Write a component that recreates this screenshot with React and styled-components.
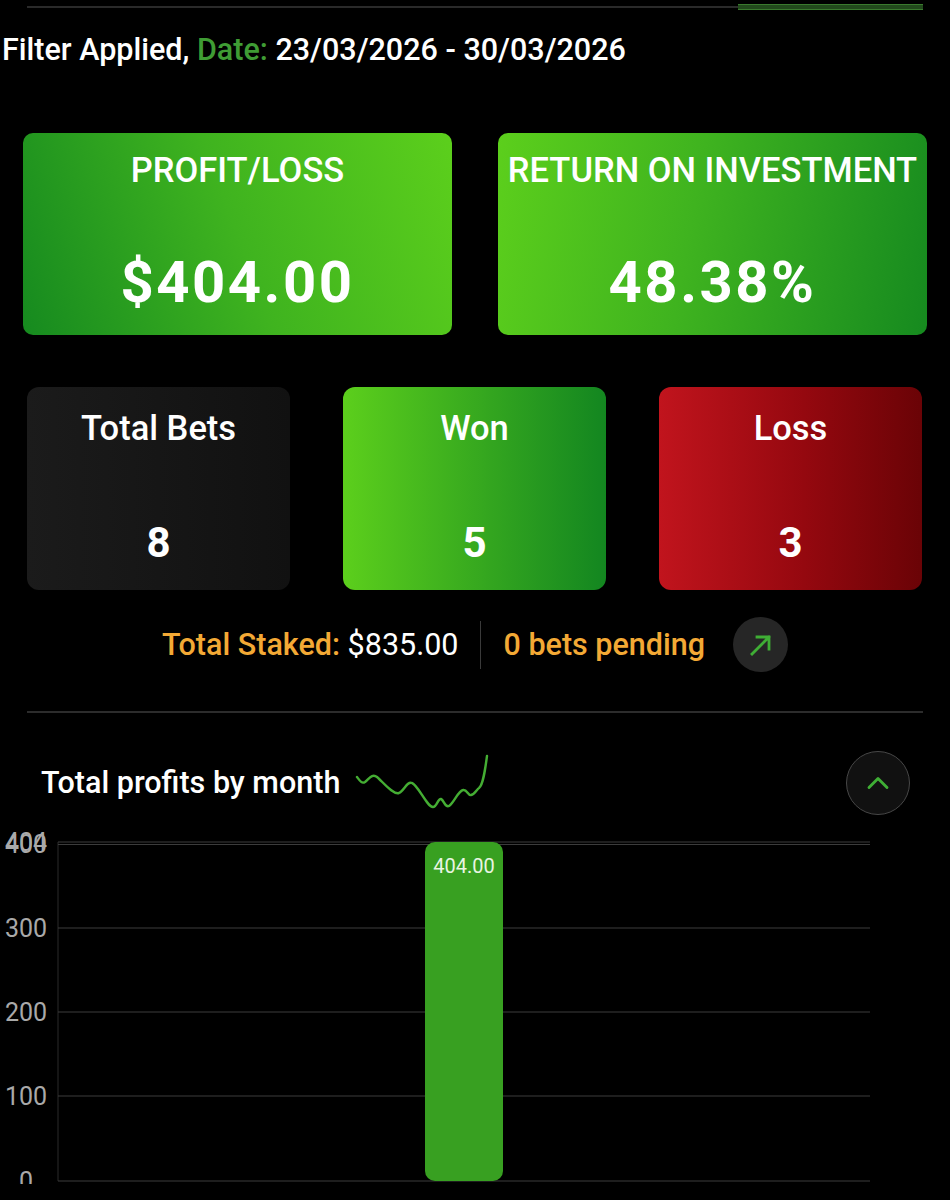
import React from "react";
import styled, { createGlobalStyle } from "styled-components";
import { ChevronUp } from "lucide-react";

const GlobalStyle = createGlobalStyle`
  * { box-sizing: border-box; }
  html, body {
    margin: 0;
    padding: 0;
    background: #000;
    color: #fff;
    font-family: Roboto, "Liberation Sans", sans-serif;
  }
`;

const Page = styled.div`
  width: 950px;
  height: 1200px;
  overflow: hidden;
  background: #000;
  display: flex;
  flex-direction: column;
`;

const TabBar = styled.div`
  margin: 0 27px;
  height: 14px;
  display: flex;
  justify-content: flex-end;
  align-items: center;
  background: linear-gradient(#2a2a2a, #2a2a2a) center / 100% 2px no-repeat;
`;

const TabIndicator = styled.div`
  width: 185px;
  height: 6px;
  border-top: 1.5px solid #3a7a2e;
  border-bottom: 1.5px solid #3a7a2e;
  background: #22491c;
`;

const FilterText = styled.div`
  margin-top: 18px;
  padding-left: 2px;
  font-size: 30.5px;
  font-weight: 500;
  line-height: 36px;
  white-space: nowrap;
`;

const Green = styled.span`
  color: #3f9c34;
`;

const TopGrid = styled.div`
  margin: 65px 23px 0;
  display: grid;
  grid-template-columns: 429px 429px;
  gap: 46px;
`;

const BigCard = styled.div`
  height: 202px;
  border-radius: 10px;
  padding: 16px 0 18px;
  display: flex;
  flex-direction: column;
  align-items: center;
  background: ${(p) =>
    p.$reverse
      ? "linear-gradient(100deg, #5ccf1c 0%, #3fb31f 45%, #168a1f 100%)"
      : "linear-gradient(70deg, #168a1f 0%, #3fb31f 50%, #5ccf1c 100%)"};
`;

const BigTitle = styled.div`
  font-size: 34.5px;
  font-weight: 500;
  line-height: 42px;
  white-space: nowrap;
`;

const BigValue = styled.div`
  margin-top: auto;
  font-size: 58px;
  font-weight: 700;
  line-height: 70px;
  letter-spacing: 2.5px;
`;

const SmallGrid = styled.div`
  margin: 52px 27px 0;
  display: grid;
  grid-template-columns: repeat(3, 263px);
  gap: 53px;
`;

const smallBg = {
  dark: "linear-gradient(90deg, #1b1b1b, #111111)",
  won: "linear-gradient(90deg, #5ccf1c 0%, #34a61f 55%, #138620 100%)",
  loss: "linear-gradient(90deg, #c1141d 0%, #95080f 55%, #6a0306 100%)",
};

const SmallCard = styled.div`
  height: 203px;
  border-radius: 12px;
  padding: 21px 0 22px;
  display: flex;
  flex-direction: column;
  align-items: center;
  background: ${(p) => smallBg[p.$tone]};
`;

const SmallTitle = styled.div`
  font-size: 34.5px;
  font-weight: 500;
  line-height: 40px;
`;

const SmallValue = styled.div`
  margin-top: auto;
  font-size: 42px;
  font-weight: 700;
  line-height: 50px;
`;

const StakedRow = styled.div`
  margin-top: 27px;
  height: 55px;
  display: flex;
  justify-content: center;
  align-items: center;
  gap: 22px;
  font-size: 30.5px;
  line-height: 36px;
`;

const Orange = styled.span`
  color: #f3a935;
  font-weight: 500;
`;

const White = styled.span`
  color: #fff;
`;

const VDivider = styled.div`
  width: 1px;
  height: 48px;
  background: #3a3a3a;
`;

const RoundButton = styled.div`
  width: ${(p) => p.$size}px;
  height: ${(p) => p.$size}px;
  border-radius: 50%;
  display: flex;
  align-items: center;
  justify-content: center;
  flex-shrink: 0;
  background: ${(p) => (p.$outlined ? "#111" : "#262626")};
  border: ${(p) => (p.$outlined ? "1.5px solid #474747" : "none")};
  color: #3fae35;
`;

const PendingButton = styled(RoundButton)`
  margin-left: 6px;
`;

const HDivider = styled.div`
  margin: 39px 27px 0 27px;
  height: 2px;
  background: #2c2c2c;
`;

const ChartHeader = styled.div`
  margin-top: 38px;
  height: 64px;
  padding: 0 40px 0 41px;
  display: flex;
  align-items: center;
`;

const ChartTitle = styled.div`
  font-size: 30.5px;
  font-weight: 500;
  line-height: 36px;
  white-space: nowrap;
`;

const Spark = styled.svg`
  margin-left: 15px;
  align-self: flex-start;
  flex-shrink: 0;
`;

const Spacer = styled.div`
  flex: 1;
`;

const ChartSvg = styled.svg`
  display: block;
  font-family: Roboto, "Liberation Sans", sans-serif;
`;

const ArrowIcon = () => (
  <svg width="24" height="24" viewBox="0 0 24 24" fill="none">
    <path
      d="M3 21 L20 4 M8 4 H20 V16"
      stroke="currentColor"
      strokeWidth="2.8"
      strokeLinecap="square"
    />
  </svg>
);

const ticks = [
  { label: "404", y: 27 },
  { label: "400", y: 29.5 },
  { label: "300", y: 113 },
  { label: "200", y: 197 },
  { label: "100", y: 281 },
  { label: "0", y: 366 },
];

const Chart = () => (
  <ChartSvg width="950" height="369" viewBox="0 0 950 369">
    <line x1="58" y1="27" x2="58" y2="366" stroke="#2a2a2a" strokeWidth="1" />
    {ticks.map((t) => (
      <line
        key={"g" + t.label}
        x1="58"
        y1={t.y}
        x2="870"
        y2={t.y}
        stroke="#3c3c3c"
        strokeWidth="1.2"
      />
    ))}
    {ticks.map((t) => (
      <text
        key={"t" + t.label}
        x="26"
        y={t.y}
        textAnchor="middle"
        dominantBaseline="central"
        fontSize="25"
        fill="#a9a9a9"
      >
        {t.label}
      </text>
    ))}
    <rect x="425" y="27" width="78" height="339" rx="10" fill="#38a021" />
    <text
      x="464"
      y="51"
      textAnchor="middle"
      dominantBaseline="central"
      fontSize="20"
      fill="#e9f5e3"
    >
      404.00
    </text>
  </ChartSvg>
);

export default function App() {
  return (
    <Page>
      <GlobalStyle />
      <TabBar>
        <TabIndicator />
      </TabBar>
      <FilterText>
        Filter Applied, <Green>Date:</Green> 23/03/2026 - 30/03/2026
      </FilterText>

      <TopGrid>
        <BigCard>
          <BigTitle>PROFIT/LOSS</BigTitle>
          <BigValue>$404.00</BigValue>
        </BigCard>
        <BigCard $reverse>
          <BigTitle>RETURN ON INVESTMENT</BigTitle>
          <BigValue>48.38%</BigValue>
        </BigCard>
      </TopGrid>

      <SmallGrid>
        <SmallCard $tone="dark">
          <SmallTitle>Total Bets</SmallTitle>
          <SmallValue>8</SmallValue>
        </SmallCard>
        <SmallCard $tone="won">
          <SmallTitle>Won</SmallTitle>
          <SmallValue>5</SmallValue>
        </SmallCard>
        <SmallCard $tone="loss">
          <SmallTitle>Loss</SmallTitle>
          <SmallValue>3</SmallValue>
        </SmallCard>
      </SmallGrid>

      <StakedRow>
        <span>
          <Orange>Total Staked:</Orange> <White>$835.00</White>
        </span>
        <VDivider />
        <Orange>0 bets pending</Orange>
        <PendingButton $size={55}>
          <ArrowIcon />
        </PendingButton>
      </StakedRow>

      <HDivider />

      <ChartHeader>
        <ChartTitle>Total profits by month</ChartTitle>
        <Spark width="135" height="60" viewBox="0 0 135 60">
          <path
            d="M2 26 C5 30 7 33 10 31 C14 28 17 22 22 26 C28 31 38 44 44 42 C49 40 52 30 57 32 C63 34 72 56 78 56 C82 56 83 47 86 48 C89 49 90 57 94 55 C99 52 103 40 108 39 C112 38 113 45 116 44 C120 43 122 38 124 37 C128 34 130 20 132 5"
            fill="none"
            stroke="#44ad33"
            strokeWidth="2.4"
            strokeLinecap="round"
            strokeLinejoin="round"
          />
        </Spark>
        <Spacer />
        <RoundButton $size={64} $outlined>
          <ChevronUp size={36} strokeWidth={1.9} />
        </RoundButton>
      </ChartHeader>

      <Chart />
    </Page>
  );
}
